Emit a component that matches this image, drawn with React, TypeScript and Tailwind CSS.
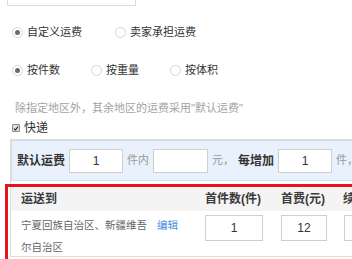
import React from "react";

const FONT = "font-['Liberation_Sans','Noto_Sans_CJK_SC',sans-serif]";

function Radio({ checked, label }: { checked?: boolean; label: string }) {
  return (
    <div className="flex items-center gap-[4px]">
      <span className="flex h-[11px] w-[11px] items-center justify-center rounded-full border border-[#d4d4d4] bg-white">
        {checked && <span className="h-[5px] w-[5px] rounded-full bg-[#6b6b6b]" />}
      </span>
      <span className="text-[11px] text-[#333]">{label}</span>
    </div>
  );
}

function Box({ value, w, h = "h-[24px]" }: { value?: string; w: string; h?: string }) {
  return (
    <div className={`${w} ${h} flex shrink-0 items-center justify-center border border-[#cfcfcf] bg-white text-[12px] text-[#333]`}>
      {value}
    </div>
  );
}

export default function App() {
  return (
    <div className={`relative h-[259px] w-[352px] overflow-hidden bg-white ${FONT}`}>
      <div className="w-[440px]">
        {/* bottom edge of the field above */}
        <div className="ml-[7px] h-[6px] w-[129px] border border-t-0 border-[#dcdcdc]" />

        {/* fee mode */}
        <div className="ml-[12px] mt-[16px] flex h-[20px] items-center gap-[33px]">
          <Radio checked label="自定义运费" />
          <Radio label="卖家承担运费" />
        </div>

        {/* pricing mode */}
        <div className="ml-[12px] mt-[18px] flex h-[20px] items-center gap-[31px]">
          <Radio checked label="按件数" />
          <Radio label="按重量" />
          <Radio label="按体积" />
        </div>

        <p className="ml-[15px] mt-[18px] h-[20px] text-[11px] leading-[20px] text-[#a3a3a3]">
          除指定地区外，其余地区的运费采用"默认运费"
        </p>

        <div className="ml-[12px] flex h-[20px] items-center gap-[4px]">
          <span className="flex h-[8px] w-[8px] items-center justify-center rounded-[1px] border border-[#8a8a8a] bg-[#dedede]">
            <svg viewBox="0 0 8 8" className="h-[7px] w-[7px]">
              <path d="M1.2 4.2 L3.2 6 L6.8 1.6" fill="none" stroke="#222" strokeWidth="1.5" />
            </svg>
          </span>
          <span className="text-[12px] text-[#333]">快递</span>
        </div>

        {/* delivery frame */}
        <div className="ml-[10px] mt-[1px] border-l border-t border-[#dcdcdc]">
          <div className="flex h-[41px] items-center gap-[4px] border border-r-0 border-[#d3dfee] bg-[#e8f1fc] pl-[5px]">
            <span className="text-[12px] font-bold text-[#333]">默认运费</span>
            <Box value="1" w="w-[54px]" />
            <span className="text-[11px] text-[#999]">件内</span>
            <Box w="w-[55px]" />
            <span className="text-[11px] text-[#999]">元，</span>
            <span className="text-[12px] font-bold text-[#333]">每增加</span>
            <Box value="1" w="w-[54px]" />
            <span className="text-[11px] text-[#999]">件，</span>
          </div>

          <div className="mt-[5px]">
            <div className="flex h-[25px] items-center bg-[#f4f4f4] text-[12px] font-bold text-[#3a3a3a]">
              <span className="w-[194px] pl-[10px]">运送到</span>
              <span className="w-[76px]">首件数(件)</span>
              <span className="w-[62px]">首费(元)</span>
              <span>续件数(件)</span>
            </div>
            <div className="flex h-[46px] items-start border-b border-[#f6d2d2]">
              <div className="flex w-[194px] pl-[10px] pt-[3px] text-[10.5px] leading-[22px]">
                <span className="w-[128px] text-[#666]">宁夏回族自治区、新疆维吾尔自治区</span>
                <span className="ml-[8px] text-[#4a90e2]">编辑</span>
              </div>
              <div className="mt-[4px] w-[76px]">
                <Box value="1" w="w-[58px]" h="h-[26px]" />
              </div>
              <div className="mt-[4px] w-[63px]">
                <Box value="12" w="w-[46px]" h="h-[26px]" />
              </div>
              <div className="mt-[4px]">
                <Box value="1" w="w-[58px]" h="h-[26px]" />
              </div>
            </div>
          </div>
        </div>
      </div>

      {/* red annotation box */}
      <div className="pointer-events-none absolute left-[5px] top-[184px] h-[120px] w-[420px] border-[3px] border-[#e8141c]" />
    </div>
  );
}
